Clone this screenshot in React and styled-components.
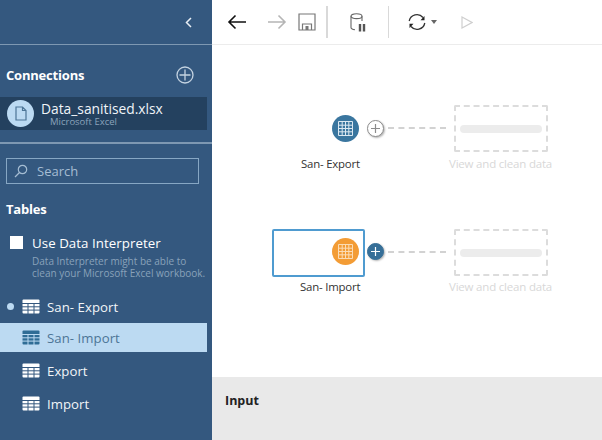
import React from "react";
import styled, { createGlobalStyle } from "styled-components";

const Global = createGlobalStyle`
  html, body { margin: 0; padding: 0; background: #fff; }
  body { font-family: "Open Sans", "Noto Sans", "Liberation Sans", sans-serif; }
  #root { width: 602px; height: 440px; overflow: hidden; }
`;
const Page = styled.div`display: flex; width: 602px; height: 440px; overflow: hidden;`;
const Sidebar = styled.aside`
  width: 212px; height: 440px; flex: none; background: #34587f; color: #fff;
  display: flex; flex-direction: column; box-sizing: border-box;
`;
const Collapse = styled.div`
  height: 45px; flex: none; display: flex; align-items: center; justify-content: flex-end;
  padding-right: 20px; box-sizing: border-box; border-bottom: 1.5px solid #7e98b2;
`;
const ConnHead = styled.div`
  height: 52px; display: flex; align-items: center; justify-content: space-between;
  padding: 8px 18px 0 6px; box-sizing: border-box; flex: none;
`;
const Heading = styled.div`font-size: 13px; font-weight: 700; letter-spacing: -0.2px; line-height: 18px;`;
const ConnRow = styled.div`
  height: 33px; width: 207px; flex: none; background: #24415f; display: flex; align-items: center;
  padding-left: 7px; box-sizing: border-box; gap: 7px;
`;
const ConnIcon = styled.div`
  width: 27px; height: 27px; border-radius: 50%; background: #bcdaf2; display: flex;
  align-items: center; justify-content: center; flex: none;
`;
const ConnText = styled.div`display: flex; flex-direction: column; gap: 2px; margin-top: 2px;`;
const ConnName = styled.div`font-size: 13.8px; line-height: 13px; color: #f0f4f8;`;
const ConnType = styled.div`font-size: 9.5px; line-height: 10px; color: #8ba3bb; padding-left: 9px;`;
const Divider = styled.div`height: 2px; background: #7e98b2; margin-top: 12px; flex: none;`;
const SearchBox = styled.div`
  margin: 14px 0 0 6px; width: 193px; height: 26px; box-sizing: border-box; border: 1px solid #87a7c4;
  display: flex; align-items: center; gap: 9px; padding-left: 7px; flex: none;
`;
const SearchText = styled.span`font-size: 13px; color: #a5bdd3;`;
const TablesHead = styled(Heading)`margin: 16px 0 0 6px;`;
const Interpreter = styled.label`display: flex; align-items: center; gap: 9px; margin: 16px 0 0 10px; height: 17px;`;
const Check = styled.span`width: 13px; height: 13px; background: #fff; flex: none;`;
const InterpTitle = styled.span`font-size: 13.3px; color: #fff; letter-spacing: 0.05px;`;
const InterpNote = styled.div`
  margin: 4px 0 0 32px; font-size: 10px; line-height: 12px; color: #89a2ba; white-space: nowrap;
`;
const TableList = styled.div`display: flex; flex-direction: column; margin-top: 11px;`;
const TableRow = styled.div`
  height: ${p => p.$h}px; width: 207px; display: flex; align-items: center; padding-left: 22px;
  box-sizing: border-box; gap: 7px; position: relative; font-size: 13.2px; letter-spacing: 0.05px;
  background: ${p => (p.$active ? "#bcdaf2" : "transparent")};
  color: ${p => (p.$active ? "#4d7596" : "#f2f5f8")};
`;
const Dot = styled.span`
  position: absolute; left: 7px; top: 50%; width: 7px; height: 7px; margin-top: -4px;
  border-radius: 50%; background: #bcdaf2;
`;
const Main = styled.main`flex: 1; display: flex; flex-direction: column; min-width: 0;`;
const Toolbar = styled.div`
  height: 45px; flex: none; box-sizing: border-box; border-bottom: 1.5px solid #ececec;
  display: flex; align-items: center; padding-left: 15px;
`;
const ToolIcon = styled.div`display: flex; align-items: center; margin-left: ${p => p.$ml || 0}px;`;
const Sep = styled.div`width: 1.5px; height: 32px; background: #d9d9d9; margin-left: ${p => p.$ml}px;`;
const Canvas = styled.div`flex: 1; position: relative; background: #fff;`;
const Node = styled.div`
  position: absolute; width: 27px; height: 27px; border-radius: 50%; left: ${p => p.$x}px; top: ${p => p.$y}px;
  background: ${p => p.$c}; display: flex; align-items: center; justify-content: center;
`;
const Plus = styled.div`
  position: absolute; left: ${p => p.$x}px; top: ${p => p.$y}px; width: 17px; height: 17px; border-radius: 50%;
  box-sizing: border-box; background: ${p => (p.$on ? "#366f98" : "#fff")};
  border: 1px solid ${p => (p.$on ? "#366f98" : "#8c8c8c")};
  box-shadow: 1px 1px 2px rgba(0,0,0,.3); display: flex; align-items: center; justify-content: center;
`;
const Label = styled.div`
  position: absolute; left: ${p => p.$x}px; top: ${p => p.$y}px; font-size: ${p => p.$s || 11.4}px; line-height: 14px;
  letter-spacing: -0.2px; white-space: nowrap; color: ${p => p.$c || "#333"};
`;
const Selected = styled.div`
  position: absolute; left: 60px; top: 184px; width: 93px; height: 48px; box-sizing: border-box;
  border: 2px solid #4f9bd0; border-radius: 2px; background: #fff;
`;
const Ghost = styled.div`
  position: absolute; left: 242px; top: ${p => p.$y}px; width: 94px; height: 47px; box-sizing: border-box;
  border: 2px dashed #dcdcdc; border-radius: 2px; display: flex; align-items: center; justify-content: center;
`;
const GhostBar = styled.div`width: 82px; height: 8px; border-radius: 4px; background: #ececec;`;
const Link = styled.div`
  position: absolute; left: 176px; top: ${p => p.$y}px; width: 58px; border-top: 2px dashed #d2d2d2;
`;
const InputPanel = styled.div`
  height: 63px; flex: none; background: #e9e9e9; box-sizing: border-box; padding: 15px 0 0 13px;
  font-size: 12.5px; font-weight: 700; line-height: 17px; color: #222;
`;

const GridIcon = ({ c = "#fff", line = "#34587f", w = 18, h = 15 }) => (
  <svg width={w} height={h} viewBox="0 0 18 15">
    <rect x="0.5" y="0.5" width="17" height="14" rx="1" fill={c} />
    <path d="M0 4.5H18M0 7.8H18M0 11.1H18M6 4.5V15M12 4.5V15" stroke={line} strokeWidth="1" />
  </svg>
);
const RoundGrid = ({ c }) => (
  <svg width="15" height="15" viewBox="0 0 15 15" fill="none" stroke={c} strokeWidth="1">
    <path d="M.5.5H14.5V14.5H.5ZM.5 4.2H14.5M.5 7.5H14.5M.5 10.8H14.5M4.2.5V14.5M7.5.5V14.5M10.8.5V14.5" />
  </svg>
);
const PlusGlyph = ({ c }) => (
  <svg width="11" height="11" viewBox="0 0 11 11"><path d="M5.5 1V10M1 5.5H10" stroke={c} strokeWidth="1.2" /></svg>
);

export default function App() {
  return (
    <Page>
      <Global />
      <Sidebar>
        <Collapse>
          <svg width="7" height="11" viewBox="0 0 7 11" fill="none"><path d="M6 1L1.5 5.5L6 10" stroke="#e8eef4" strokeWidth="1.5" /></svg>
        </Collapse>
        <ConnHead>
          <Heading>Connections</Heading>
          <svg width="18" height="18" viewBox="0 0 18 18" fill="none" stroke="#c4d3e1" strokeWidth="1.3">
            <circle cx="9" cy="9" r="8" /><path d="M9 3.5V14.5M3.5 9H14.5" />
          </svg>
        </ConnHead>
        <ConnRow>
          <ConnIcon>
            <svg width="12" height="15" viewBox="0 0 12 15" fill="none" stroke="#4d7596" strokeWidth="1.2">
              <path d="M1 1H7.5L11 4.5V14H1ZM7.5 1V4.5H11" />
            </svg>
          </ConnIcon>
          <ConnText>
            <ConnName>Data_sanitised.xlsx</ConnName>
            <ConnType>Microsoft Excel</ConnType>
          </ConnText>
        </ConnRow>
        <Divider />
        <SearchBox>
          <svg width="14" height="14" viewBox="0 0 14 14" fill="none" stroke="#a5bdd3" strokeWidth="1.2">
            <circle cx="8.5" cy="5.5" r="4.2" /><path d="M5.5 8.5L1 13" />
          </svg>
          <SearchText>Search</SearchText>
        </SearchBox>
        <TablesHead>Tables</TablesHead>
        <Interpreter><Check /><InterpTitle>Use Data Interpreter</InterpTitle></Interpreter>
        <InterpNote>Data Interpreter might be able to<br />clean your Microsoft Excel workbook.</InterpNote>
        <TableList>
          <TableRow $h={33}><Dot /><GridIcon line="#34587f" />San- Export</TableRow>
          <TableRow $h={29} $active><GridIcon c="#2f6d96" line="#bcdaf2" />San- Import</TableRow>
          <TableRow $h={37}><GridIcon />Export</TableRow>
          <TableRow $h={29}><GridIcon />Import</TableRow>
        </TableList>
      </Sidebar>
      <Main>
        <Toolbar>
          <ToolIcon>
            <svg width="20" height="16" viewBox="0 0 20 16" fill="none" stroke="#111" strokeWidth="1.6"><path d="M19 8H2M8.5 1.5L2 8L8.5 14.5" /></svg>
          </ToolIcon>
          <ToolIcon $ml={20}>
            <svg width="20" height="16" viewBox="0 0 20 16" fill="none" stroke="#b5b5b5" strokeWidth="1.6"><path d="M1 8H18M11.5 1.5L18 8L11.5 14.5" /></svg>
          </ToolIcon>
          <ToolIcon $ml={11}>
            <svg width="18" height="18" viewBox="0 0 18 18" fill="none" stroke="#777" strokeWidth="1.2">
              <path d="M1 1H17V17H1Z" /><path d="M4.5 17V11H13.5V17" /><rect x="7.5" y="13" width="3" height="4" fill="#777" stroke="none" />
            </svg>
          </ToolIcon>
          <Sep $ml={10} />
          <ToolIcon $ml={22}>
            <svg width="16" height="19" viewBox="0 0 16 19" fill="none" stroke="#666" strokeWidth="1.1">
              <ellipse cx="6.5" cy="3.2" rx="5.5" ry="2.4" /><path d="M1 3.2V14.5C1 15.8 3 16.5 5 16.7M12 3.2V8" />
              <path d="M10 11V18.5M14 11V18.5" strokeWidth="2.4" stroke="#555" />
            </svg>
          </ToolIcon>
          <Sep $ml={22} />
          <ToolIcon $ml={18}>
            <svg width="20" height="20" viewBox="0 0 20 20" fill="none" stroke="#333" strokeWidth="1.3">
              <path d="M2.2 9A7.9 7.9 0 0 1 16 5.5M17.8 11A7.9 7.9 0 0 1 4 14.5" />
              <path d="M17.5 4V8.2H13.5ZM2.5 16V11.8H6.5Z" fill="#222" stroke="none" />
            </svg>
          </ToolIcon>
          <ToolIcon $ml={4}>
            <svg width="6" height="4" viewBox="0 0 6 4"><path d="M0 0H6L3 4Z" fill="#666" /></svg>
          </ToolIcon>
          <ToolIcon $ml={24}>
            <svg width="12" height="13" viewBox="0 0 12 13" fill="none" stroke="#cfcfcf" strokeWidth="1.2"><path d="M1 1L11 6.5L1 12Z" /></svg>
          </ToolIcon>
        </Toolbar>
        <Canvas>
          <Node $x={120} $y={70} $c="#3a769f"><RoundGrid c="#dbe8f1" /></Node>
          <Plus $x={155} $y={75}><PlusGlyph c="#8c8c8c" /></Plus>
          <Link $y={82} />
          <Ghost $y={60}><GhostBar /></Ghost>
          <Label $x={89} $y={112} $c="#333">San- Export</Label>
          <Label $x={237} $y={112} $c="#d8d8d8" $s={11.5}>View and clean data</Label>

          <Selected />
          <Node $x={120} $y={193} $c="#f39c35"><RoundGrid c="#fbdcb5" /></Node>
          <Plus $x={155} $y={198} $on><PlusGlyph c="#fff" /></Plus>
          <Link $y={206} />
          <Ghost $y={184}><GhostBar /></Ghost>
          <Label $x={88} $y={235} $c="#333">San- Import</Label>
          <Label $x={237} $y={235} $c="#d8d8d8" $s={11.5}>View and clean data</Label>
        </Canvas>
        <InputPanel>Input</InputPanel>
      </Main>
    </Page>
  );
}
